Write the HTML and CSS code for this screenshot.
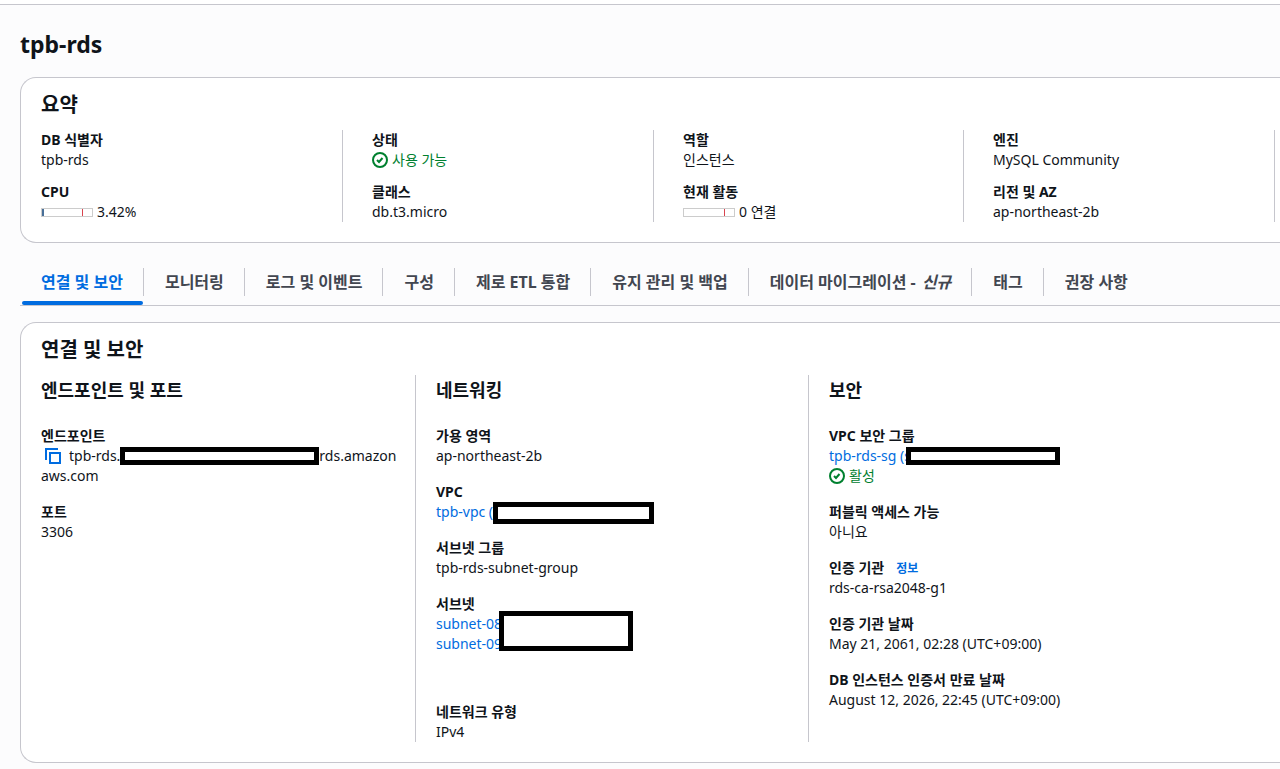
FILE: index.html
```html
<!DOCTYPE html>
<html lang="ko">
<head>
<meta charset="utf-8">
<meta name="viewport" content="width=device-width, initial-scale=1">
<title>tpb-rds</title>
<link rel="stylesheet" href="styles.css">
</head>
<body>
<main class="page">
  <h1 class="page-title">tpb-rds</h1>

  <section class="card">
    <h2 class="card-title">요약</h2>
    <div class="summary">
      <dl class="summary-col">
        <div><dt>DB 식별자</dt><dd>tpb-rds</dd></div>
        <div><dt>CPU</dt><dd class="with-icon"><span class="gauge"><span class="gauge-fill"></span><span class="gauge-limit"></span></span>3.42%</dd></div>
      </dl>
      <dl class="summary-col">
        <div><dt>상태</dt><dd class="with-icon status"><svg class="icon" viewBox="0 0 16 16" aria-hidden="true"><circle cx="8" cy="8" r="7"/><path d="M5 8l2 2 3.5-4"/></svg>사용 가능</dd></div>
        <div><dt>클래스</dt><dd>db.t3.micro</dd></div>
      </dl>
      <dl class="summary-col">
        <div><dt>역할</dt><dd>인스턴스</dd></div>
        <div><dt>현재 활동</dt><dd class="with-icon"><span class="gauge"><span class="gauge-limit"></span></span>0 연결</dd></div>
      </dl>
      <dl class="summary-col">
        <div><dt>엔진</dt><dd>MySQL Community</dd></div>
        <div><dt>리전 및 AZ</dt><dd>ap-northeast-2b</dd></div>
      </dl>
      <div class="summary-edge"></div>
    </div>
  </section>

  <div class="tabs" role="tablist">
    <button class="tab tab-active" type="button" role="tab" aria-selected="true">연결 및 보안</button>
    <button class="tab" type="button" role="tab">모니터링</button>
    <button class="tab" type="button" role="tab">로그 및 이벤트</button>
    <button class="tab" type="button" role="tab">구성</button>
    <button class="tab" type="button" role="tab">제로 ETL 통합</button>
    <button class="tab" type="button" role="tab">유지 관리 및 백업</button>
    <button class="tab" type="button" role="tab">데이터 마이그레이션 - <em class="tab-badge">신규</em></button>
    <button class="tab" type="button" role="tab">태그</button>
    <button class="tab" type="button" role="tab">권장 사항</button>
  </div>

  <section class="card">
    <h2 class="card-title">연결 및 보안</h2>
    <div class="details">
      <div class="details-col">
        <h3 class="col-title">엔드포인트 및 포트</h3>
        <dl class="fields">
          <div><dt>엔드포인트</dt><dd><button class="copy" type="button" aria-label="복사"><svg class="icon" viewBox="0 0 16 16" aria-hidden="true"><path d="M1 12V1h12"/><path d="M5 5h10v10H5z"/></svg></button>tpb-rds.<span class="mask mask-endpoint"></span>rds.amazon<br>aws.com</dd></div>
          <div><dt>포트</dt><dd>3306</dd></div>
        </dl>
      </div>
      <div class="details-col">
        <h3 class="col-title">네트워킹</h3>
        <dl class="fields">
          <div><dt>가용 영역</dt><dd>ap-northeast-2b</dd></div>
          <div><dt>VPC</dt><dd class="masked"><a href="#">tpb-vpc (</a><span class="mask mask-vpc"></span></dd></div>
          <div><dt>서브넷 그룹</dt><dd>tpb-rds-subnet-group</dd></div>
          <div><dt>서브넷</dt><dd class="masked subnets"><a href="#">subnet-08</a><a href="#">subnet-09</a><span class="mask mask-subnets"></span></dd></div>
          <div><dt>네트워크 유형</dt><dd>IPv4</dd></div>
        </dl>
      </div>
      <div class="details-col">
        <h3 class="col-title">보안</h3>
        <dl class="fields">
          <div><dt>VPC 보안 그룹</dt><dd class="masked"><a href="#">tpb-rds-sg (s</a><span class="mask mask-group"></span></dd><dd class="with-icon status"><svg class="icon" viewBox="0 0 16 16" aria-hidden="true"><circle cx="8" cy="8" r="7"/><path d="M5 8l2 2 3.5-4"/></svg>활성</dd></div>
          <div><dt>퍼블릭 액세스 가능</dt><dd>아니요</dd></div>
          <div><dt>인증 기관<a class="info" href="#">정보</a></dt><dd>rds-ca-rsa2048-g1</dd></div>
          <div><dt>인증 기관 날짜</dt><dd>May 21, 2061, 02:28 (UTC+09:00)</dd></div>
          <div><dt>DB 인스턴스 인증서 만료 날짜</dt><dd>August 12, 2026, 22:45 (UTC+09:00)</dd></div>
        </dl>
      </div>
    </div>
  </section>
</main>
</body>
</html>
```
FILE: styles.css
```css
* { box-sizing: border-box; }

body {
  margin: 0;
  padding-top: 4px;
  background: linear-gradient(#fff 4px, #fcfcfd 4px);
  color: #0f141a;
  font-family: "Noto Sans", "Noto Sans CJK KR", sans-serif;
  font-size: 14px;
  line-height: 20px;
  overflow-x: hidden;
}

h1, h2, h3, dl, dd { margin: 0; }
dt { font-weight: 700; }
a { color: #006ce0; text-decoration: none; }

.page {
  border-top: 1px solid #c6c6cd;
  padding: 24px 0 6px 20px;
}

.page-title {
  margin-bottom: 18px;
  font-size: 23px;
  line-height: 30px;
}

.card {
  padding: 15px 0 20px 20px;
  border: 1px solid #c6c6cd;
  border-right: 0;
  border-radius: 16px 0 0 16px;
  background: #fff;
}

.card-title {
  margin-bottom: 13px;
  font-size: 20px;
  line-height: 24px;
}

.summary {
  display: grid;
  grid-template-columns: 301fr 311fr 310fr 311fr 6fr;
}

.summary-col {
  display: flex;
  flex-direction: column;
  gap: 12px;
}

.summary-col + .summary-col {
  padding-left: 29px;
  border-left: 1px solid #c6c6cd;
}

.summary-edge { border-left: 1px solid #c6c6cd; }

.with-icon {
  display: flex;
  align-items: center;
  gap: 4px;
}

.status { color: #00802f; }

.icon {
  display: block;
  width: 16px;
  height: 16px;
  fill: none;
  stroke: currentColor;
  stroke-width: 2;
}

.gauge {
  display: flex;
  justify-content: space-between;
  width: 52px;
  height: 9px;
  padding-right: 9px;
  border: 1px solid #ccc;
}

.gauge-fill {
  width: 2px;
  background: #486f98;
}

.gauge-limit {
  width: 1px;
  margin-left: auto;
  background: #d9434e;
}

.tabs {
  display: flex;
  margin: 16px 0;
  padding-left: 1px;
  border-bottom: 1px solid #c6c6cd;
}

.tab {
  position: relative;
  display: block;
  height: 46px;
  padding: 0 21px;
  border: 0;
  background: linear-gradient(#c6c6cd, #c6c6cd) right center / 1px 28px no-repeat;
  color: #424650;
  font: inherit;
  font-size: 16px;
  font-weight: 700;
  white-space: nowrap;
}

.tab:last-child { background: none; }

.tab-badge { margin-left: 2px; }

.tab-active {
  padding-left: 20px;
  color: #006ce0;
}

.tab-active::after {
  content: "";
  position: absolute;
  right: 1px;
  bottom: 0;
  left: 1px;
  height: 4px;
  border-radius: 2px;
  background: #006ce0;
}

.details {
  display: grid;
  grid-template-columns: 374fr 393fr 472fr;
}

.details-col + .details-col {
  padding-left: 20px;
  border-left: 1px solid #c6c6cd;
}

.col-title {
  padding: 4px 0 25px;
  font-size: 18px;
  line-height: 22px;
}

.fields {
  display: flex;
  flex-direction: column;
  gap: 16px;
}

.copy {
  display: inline-block;
  margin: 2px 8px 0 4px;
  padding: 0;
  border: 0;
  background: none;
  color: #006ce0;
  vertical-align: top;
}

.mask {
  border: 5px solid #000;
  background: #fff;
}

.masked { position: relative; }
.masked .mask { position: absolute; }

.mask-endpoint {
  display: inline-block;
  width: 199px;
  height: 18px;
  margin-top: 1px;
  vertical-align: top;
}

.mask-vpc {
  top: 0;
  left: 57px;
  width: 161px;
  height: 22px;
}

.subnets {
  display: flex;
  flex-direction: column;
  align-items: flex-start;
  min-height: 72px;
}

.mask-subnets {
  top: -3px;
  left: 63px;
  width: 134px;
  height: 40px;
}

.mask-group {
  top: 1px;
  left: 77px;
  width: 154px;
  height: 18px;
}

.info {
  margin-left: 12px;
  font-size: 12px;
  line-height: 16px;
}
```
